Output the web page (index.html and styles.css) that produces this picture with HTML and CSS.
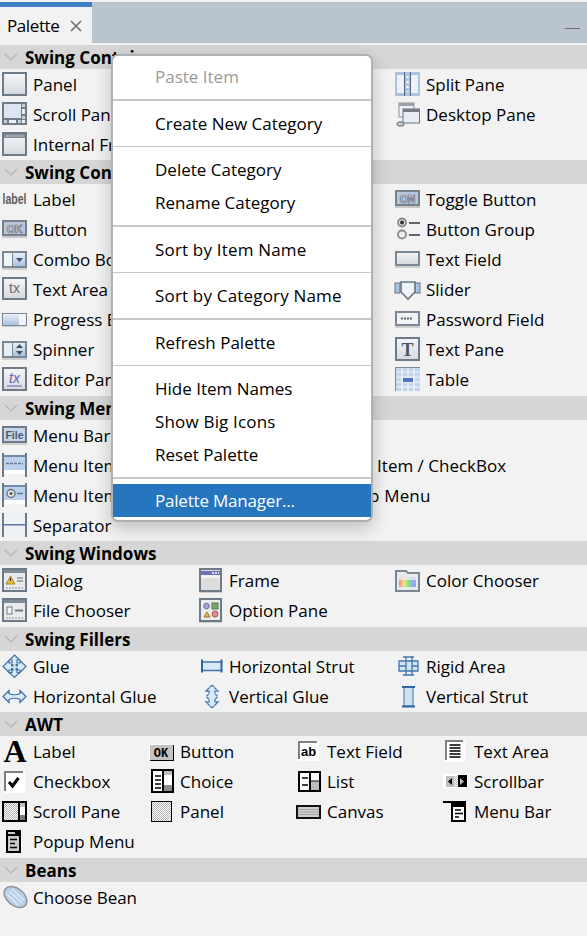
FILE: index.html
```html
<!DOCTYPE html>
<html>
  <head>
    <title>Palette</title>
    <meta charset="utf-8" />
    <link rel="stylesheet" href="styles.css">
  </head>

  <body>
    <svg class="defs">
      <defs>
        <linearGradient id="soft" x1="0" y1="0" x2="0" y2="1">
          <stop offset="0" stop-color="#f4f6f8" />
          <stop offset="1" stop-color="#d5d9de" />
        </linearGradient>
        <linearGradient id="sky" x1="0" y1="0" x2="0" y2="1">
          <stop offset="0" stop-color="#e6eef7" />
          <stop offset="1" stop-color="#a9c3e0" />
        </linearGradient>
        <linearGradient id="rainbow" x1="0" y1="0" x2="1" y2="0">
          <stop offset="0" stop-color="#f28a8a" />
          <stop offset="0.3" stop-color="#f0e37a" />
          <stop offset="0.55" stop-color="#86e48c" />
          <stop offset="0.8" stop-color="#80b4f2" />
          <stop offset="1" stop-color="#d88ae6" />
        </linearGradient>
        <pattern id="dither" width="2" height="2" patternUnits="userSpaceOnUse">
          <rect width="2" height="2" fill="#fff" />
          <rect width="1" height="1" fill="#b4b4b4" />
          <rect x="1" y="1" width="1" height="1" fill="#b4b4b4" />
        </pattern>
      </defs>
    </svg>

    <div class="tabbar">
      <div class="tab">
        <span class="tab-title">Palette</span>
        <svg class="close" width="12" height="12" viewBox="0 0 12 12"><path d="M1 1l10 10M11 1L1 11" stroke="#6f6f6f" stroke-width="1.6" /></svg>
      </div>
      <div class="minimize"></div>
    </div>

    <section>
      <h2><svg class="chev" width="14" height="8" viewBox="0 0 14 8"><path d="M1 1l6 6 6-6" fill="none" stroke="#b4b4b4" stroke-width="1.2" /></svg>Swing Containers</h2>
      <div class="grid three">
        <div class="item"><svg class="icon" viewBox="0 0 25 25"><rect x="1" y="1" width="23" height="22" fill="url(#soft)" stroke="#6d7a87" stroke-width="2" /></svg>Panel</div>
        <div class="item"></div>
        <div class="item"><svg class="icon" viewBox="0 0 25 25"><rect y="0" width="25" height="24" fill="#a9c4e2" /><rect x="2" y="3" width="7" height="18" fill="#eef2f6" /><rect x="16" y="3" width="7" height="18" fill="#eef2f6" /><rect x="9" y="0" width="1" height="24" fill="#59636e" /><rect x="15" y="0" width="1" height="24" fill="#59636e" /><path d="M12.500 4v16" stroke="#fff" stroke-width="2" stroke-dasharray="2 3" /></svg>Split Pane</div>
        <div class="item"><svg class="icon" viewBox="0 0 25 25"><rect width="25" height="23" fill="#6f7c88" /><rect x="2" y="2" width="17" height="14" fill="#dbe6f2" /><rect x="20" y="2" width="3" height="3" fill="#c8d3df" /><rect x="20" y="7" width="3" height="5" fill="#eef2f6" /><rect x="20" y="14" width="3" height="3" fill="#c8d3df" /><rect x="2" y="18" width="3" height="3" fill="#c8d3df" /><rect x="7" y="18" width="7" height="3" fill="#eef2f6" /><rect x="16" y="18" width="3" height="3" fill="#c8d3df" /><rect x="20" y="18" width="3" height="3" fill="#eef2f6" /></svg>Scroll Pane</div>
        <div class="item"></div>
        <div class="item"><svg class="icon" viewBox="0 0 25 25"><rect x="4" y="1" width="15" height="14" fill="#f0f1f3" stroke="#8a9099" /><rect x="4" y="1" width="15" height="3" fill="#9aa1a9" /><rect x="8" y="7" width="16.500" height="14" fill="#e8edf3" stroke="#6a7580" /><rect x="8" y="7" width="16.500" height="3" fill="#727d88" /><rect x="2" y="20" width="7" height="4" rx="2" fill="#c9c9c9" stroke="#666" /></svg>Desktop Pane</div>
        <div class="item"><svg class="icon" viewBox="0 0 25 25"><rect x="1" y="1" width="23" height="22" fill="url(#soft)" stroke="#6d7a87" stroke-width="2" /><rect x="2" y="2" width="21" height="4" fill="#7f8b97" /><path d="M4 4h17" stroke="#d5dae0" stroke-dasharray="2 1" /></svg>Internal Frame</div>
        <div class="item"></div>
      </div>
    </section>

    <section>
      <h2><svg class="chev" width="14" height="8" viewBox="0 0 14 8"><path d="M1 1l6 6 6-6" fill="none" stroke="#b4b4b4" stroke-width="1.2" /></svg>Swing Controls</h2>
      <div class="grid three tall">
        <div class="item"><svg class="icon" viewBox="0 0 25 25"><text class="glyph" x="12.500" y="16.500" text-anchor="middle" font-size="14" textLength="24" lengthAdjust="spacingAndGlyphs" fill="#5c5c5c">label</text></svg>Label</div>
        <div class="item"></div>
        <div class="item"><svg class="icon" viewBox="0 0 25 25"><rect x="1" y="4" width="23" height="14" fill="#b9c5d8" stroke="#77818c" stroke-width="2" /><rect x="0" y="19" width="25" height="2" fill="#c9c9c9" /><text class="glyph" x="12.500" y="15.500" text-anchor="middle" font-size="10.500" fill="#f0f3f8" stroke="#56657c" stroke-width=".7">ON</text></svg>Toggle Button</div>
        <div class="item"><svg class="icon" viewBox="0 0 25 25"><rect x="1" y="4" width="23" height="14" fill="#b9c5d8" stroke="#77818c" stroke-width="2" /><rect x="0" y="19" width="25" height="2" fill="#c9c9c9" /><text class="glyph" x="12.500" y="15.500" text-anchor="middle" font-size="10.500" fill="#f0f3f8" stroke="#56657c" stroke-width=".7">OK</text></svg>Button</div>
        <div class="item"></div>
        <div class="item"><svg class="icon" viewBox="0 0 25 25"><circle cx="7" cy="5.500" r="4" fill="#d8d8d8" stroke="#8a8a8a" stroke-width="1.800" /><circle cx="7" cy="5.500" r="2" fill="#333" /><circle cx="7" cy="17.500" r="4" fill="#efefef" stroke="#8a8a8a" stroke-width="1.800" /><rect x="14" y="5" width="11" height="2" fill="#5d6772" /><rect x="14" y="17" width="11" height="2" fill="#5d6772" /></svg>Button Group</div>
        <div class="item"><svg class="icon" viewBox="0 0 25 25"><rect x="0" y="4" width="25" height="17" fill="#7b8793" /><rect x="2" y="6" width="8" height="13" fill="#eef3f8" /><rect x="11" y="6" width="12" height="13" fill="url(#sky)" /><path d="M14 11h7l-3.500 4z" fill="#45505c" /><rect x="0" y="21" width="25" height="2" fill="#cfcfcf" /></svg>Combo Box</div>
        <div class="item"></div>
        <div class="item"><svg class="icon" viewBox="0 0 25 25"><rect x="1" y="5" width="23" height="13" fill="url(#soft)" stroke="#7b8793" stroke-width="2" /><rect x="0" y="19" width="25" height="2" fill="#cfcfcf" /></svg>Text Field</div>
        <div class="item"><svg class="icon" viewBox="0 0 25 25"><rect x="1" y="1" width="23" height="21" fill="url(#soft)" stroke="#6d7a87" stroke-width="2" /><text x="12.500" y="16" text-anchor="middle" font-size="14" font-family="Liberation Sans" fill="#6c6c6c">tx</text></svg>Text Area</div>
        <div class="item"></div>
        <div class="item"><svg class="icon" viewBox="0 0 25 25"><rect x="0" y="6" width="5" height="10" fill="#a9c4e2" stroke="#6a7580" /><rect x="20" y="6" width="5" height="10" fill="#a9c4e2" stroke="#6a7580" /><path d="M6 5h14v10l-7 7-7-7z" fill="#eef3f8" stroke="#6a7580" stroke-width="1.600" /></svg>Slider</div>
        <div class="item"><svg class="icon" viewBox="0 0 25 25"><rect x="0" y="6" width="25" height="13" fill="#7b8793" /><rect x="1" y="7" width="16" height="11" fill="url(#sky)" /><rect x="17" y="7" width="7" height="11" fill="#f1f3f5" /><rect x="0" y="19" width="25" height="1" fill="#cfcfcf" /></svg>Progress Bar</div>
        <div class="item"></div>
        <div class="item"><svg class="icon" viewBox="0 0 25 25"><rect x="1" y="5" width="23" height="13" fill="#f0f2f5" stroke="#7b8793" stroke-width="2" /><path d="M6 11.500h12" stroke="#5d6772" stroke-width="2" stroke-dasharray="2 1" /><rect x="0" y="19" width="25" height="2" fill="#cfcfcf" /></svg>Password Field</div>
        <div class="item"><svg class="icon" viewBox="0 0 25 25"><rect x="0" y="4" width="25" height="17" fill="#7b8793" /><rect x="2" y="6" width="8" height="13" fill="#e7eef6" /><rect x="11" y="6" width="12" height="13" fill="url(#sky)" /><path d="M14 11l3.500-4 3.500 4zM14 14h7l-3.500 4z" fill="#45505c" /><rect x="0" y="21" width="25" height="2" fill="#cfcfcf" /></svg>Spinner</div>
        <div class="item"></div>
        <div class="item"><svg class="icon" viewBox="0 0 25 25"><rect x="1" y="1" width="23" height="22" fill="url(#soft)" stroke="#6d7a87" stroke-width="2" /><text x="12.500" y="18.500" text-anchor="middle" font-size="18" font-weight="bold" font-family="Liberation Serif" fill="#4c5660">T</text></svg>Text Pane</div>
        <div class="item"><svg class="icon" viewBox="0 0 25 25"><rect x="1" y="1" width="23" height="22" fill="url(#soft)" stroke="#6d7a87" stroke-width="2" /><text x="12.500" y="16" text-anchor="middle" font-size="14" font-style="italic" font-family="Liberation Sans" fill="#6b5fb0">tx</text><path d="M5 19h15" stroke="#6b5fb0" /></svg>Editor Pane</div>
        <div class="item"></div>
        <div class="item"><svg class="icon" viewBox="0 0 25 25"><rect width="25" height="24" fill="#c3d5ea" /><path d="M0 5h25M0 10h25M0 15h25M0 20h25M7 0v24M13 0v24M19 0v24" stroke="#f3f6f9" stroke-width="1.200" /><rect x="8" y="11" width="10" height="4" fill="#4f74c0" /><path d="M.5 24V.5H25" fill="none" stroke="#7e8a96" /></svg>Table</div>
      </div>
    </section>

    <section>
      <h2><svg class="chev" width="14" height="8" viewBox="0 0 14 8"><path d="M1 1l6 6 6-6" fill="none" stroke="#b4b4b4" stroke-width="1.2" /></svg>Swing Menus</h2>
      <div class="grid two">
        <div class="item"><svg class="icon" viewBox="0 0 25 25"><rect x="1" y="4" width="23" height="15" fill="#c4d6ea" stroke="#6d7a87" stroke-width="2" /><rect x="0" y="20" width="25" height="2" fill="#cfcfcf" /><text class="glyph" x="12.500" y="16" text-anchor="middle" font-size="10.500" fill="#4a5a70">File</text></svg>Menu Bar</div>
        <div class="item"></div>
        <div class="item"><svg class="icon" viewBox="0 0 25 25"><rect x="0" y="0" width="2" height="24" fill="#6d7a87" /><rect x="23" y="0" width="2" height="24" fill="#6d7a87" /><rect x="2" y="2" width="21" height="2" fill="#7387a8" /><rect x="2" y="4" width="21" height="13" fill="#bcd2ea" /><rect x="2" y="17" width="21" height="4" fill="#fff" /><path d="M4 10.500h17" stroke="#69788c" stroke-width="1.500" stroke-dasharray="3 1" /></svg>Menu Item</div>
        <div class="item"><svg class="icon" viewBox="0 0 25 25"></svg>Menu Item / CheckBox</div>
        <div class="item"><svg class="icon" viewBox="0 0 25 25"><rect x="0" y="0" width="2" height="24" fill="#6d7a87" /><rect x="23" y="0" width="2" height="24" fill="#6d7a87" /><rect x="2" y="2" width="21" height="2" fill="#7387a8" /><rect x="2" y="4" width="21" height="13" fill="#bcd2ea" /><rect x="2" y="17" width="21" height="4" fill="#fff" /><circle cx="9" cy="10.500" r="4" fill="#e3e3e3" stroke="#6d7a87" stroke-width="1.500" /><circle cx="9" cy="10.500" r="1.500" fill="#56606b" /><path d="M15 10.500h6" stroke="#69788c" stroke-width="1.500" /></svg>Menu Item</div>
        <div class="item wide"><svg class="icon" viewBox="0 0 25 25"></svg>Popup Menu</div>
        <div class="item"><svg class="icon" viewBox="0 0 25 25"><rect x="0" y="0" width="2" height="24" fill="#6d7a87" /><rect x="23" y="0" width="2" height="24" fill="#6d7a87" /><rect x="2" y="2" width="21" height="20" fill="#eef1f5" /><rect x="2" y="11" width="21" height="1.500" fill="#5d74a8" /></svg>Separator</div>
      </div>
    </section>

    <section>
      <h2><svg class="chev" width="14" height="8" viewBox="0 0 14 8"><path d="M1 1l6 6 6-6" fill="none" stroke="#b4b4b4" stroke-width="1.2" /></svg>Swing Windows</h2>
      <div class="grid three tall">
        <div class="item"><svg class="icon" viewBox="0 0 25 25"><rect x="1" y="1" width="23" height="22" fill="#e8eaed" stroke="#6d7a87" stroke-width="2" /><rect x="2" y="2" width="21" height="3" fill="#7f8b97" /><path d="M4 20h17" stroke="#8a95a0" stroke-dasharray="2 1" /><path d="M4 16l4.500-8 4.500 8z" fill="#e8b93a" stroke="#a8862c" /><rect x="8" y="10" width="1" height="3" fill="#333" /><path d="M15 10h6M15 13h6" stroke="#8a95a0" stroke-width="1.500" /></svg>Dialog</div>
        <div class="item"><svg class="icon" viewBox="0 0 25 25"><rect x="2" y="1" width="21" height="22" fill="#dcdcdc" stroke="#6d7a87" stroke-width="2" /><rect x="3" y="3" width="19" height="4" fill="#6b72b8" /><path d="M14 5h7" stroke="#fff" stroke-width="1.500" stroke-dasharray="2 1" /><rect x="3" y="7" width="19" height="3" fill="#f2f2f2" /><rect x="1" y="24" width="23" height="1" fill="#cfcfcf" /></svg>Frame</div>
        <div class="item"><svg class="icon" viewBox="0 0 25 25"><path d="M1 3h10l2 2h11v18H1z" fill="#e7eaee" stroke="#7b8793" stroke-width="2" /><rect x="4" y="9" width="17" height="10" fill="url(#rainbow)" /><rect x="4" y="8" width="17" height="4" fill="#eceaf0" opacity=".8" /></svg>Color Chooser</div>
        <div class="item"><svg class="icon" viewBox="0 0 25 25"><rect x="1" y="1" width="23" height="22" fill="#e8eaed" stroke="#6d7a87" stroke-width="2" /><rect x="2" y="2" width="21" height="3" fill="#7f8b97" /><path d="M4 20h17" stroke="#8a95a0" stroke-dasharray="2 1" /><rect x="5" y="9" width="5" height="7" fill="#f5f5f5" stroke="#6d7a87" /><path d="M13 12.500h8" stroke="#6d7a87" stroke-width="2" /></svg>File Chooser</div>
        <div class="item"><svg class="icon" viewBox="0 0 25 25"><rect x="2" y="1" width="21" height="22" fill="#ececec" stroke="#6d7a87" stroke-width="2" /><circle cx="8.500" cy="8" r="2.800" fill="#a8a4d8" stroke="#6d6a9c" /><rect x="14" y="5" width="6" height="6" fill="#7aa86a" stroke="#55784a" /><path d="M6 19l3-5 3 5z" fill="#e0b94a" stroke="#967a2c" /><circle cx="17" cy="16" r="3" fill="#e08a8a" stroke="#a05a5a" /><rect x="1" y="24" width="23" height="1" fill="#cfcfcf" /></svg>Option Pane</div>
      </div>
    </section>

    <section>
      <h2><svg class="chev" width="14" height="8" viewBox="0 0 14 8"><path d="M1 1l6 6 6-6" fill="none" stroke="#b4b4b4" stroke-width="1.2" /></svg>Swing Fillers</h2>
      <div class="grid three">
        <div class="item"><svg class="icon" viewBox="0 0 25 25"><path d="M12.500 1l5 5h-2.500v3h3v-2.500l6 6-6 6v-2.500h-3v2.500h2.500l-5 5-5-5h2.500v-2.500h-3v2.500l-6-6 6-6v2.500h3v-3H7.500z" fill="#dbe8f6" stroke="#3f74ad" stroke-width="1.200" /><rect x="9" y="10" width="2.500" height="2.500" fill="#3f74ad" /><rect x="13.500" y="10" width="2.500" height="2.500" fill="#3f74ad" /><rect x="9" y="14" width="2.500" height="2.500" fill="#3f74ad" /><rect x="13.500" y="14" width="2.500" height="2.500" fill="#3f74ad" /></svg>Glue</div>
        <div class="item"><svg class="icon" viewBox="0 0 25 25"><rect x="4" y="8" width="19" height="8.500" fill="#dbe8f6" /><path d="M4 8h19M4 16.500h19" stroke="#3f74ad" stroke-width="1.300" /><path d="M4 5.500v13M23.500 5.500v13" stroke="#2f659e" stroke-width="2" /></svg>Horizontal Strut</div>
        <div class="item"><svg class="icon" viewBox="0 0 25 25"><rect x="4" y="7" width="19" height="10" fill="#d3e3f4" /><path d="M8 3h11M8 21h11M11 3v18M17 3v18M4 7h19v10H4zM4 12h7M17 12h6" stroke="#3f74ad" stroke-width="1.300" fill="none" /></svg>Rigid Area</div>
        <div class="item"><svg class="icon" viewBox="0 0 25 25"><path d="M1 12.500l6-6V9.500c3 1.500 8 1.500 11 0V6.500l6 6-6 6v-3c-3-1.500-8-1.500-11 0v3z" fill="#dbe8f6" stroke="#3f74ad" stroke-width="1.300" /></svg>Horizontal Glue</div>
        <div class="item"><svg class="icon" viewBox="0 0 25 25"><path d="M14 1l6 6h-3v3l2 1.500v2L17 15v3h3l-6 6-6-6h3v-3l-2-1.500v-2L11 10V7H8z" fill="#dbe8f6" stroke="#3f74ad" stroke-width="1.300" stroke-dasharray="3 .6" /></svg>Vertical Glue</div>
        <div class="item"><svg class="icon" viewBox="0 0 25 25"><rect x="9" y="3" width="9" height="19" fill="#cfe0f2" stroke="#3f74ad" /><path d="M7 3h13M7 22.500h13" stroke="#2f659e" stroke-width="2" /></svg>Vertical Strut</div>
      </div>
    </section>

    <section>
      <h2><svg class="chev" width="14" height="8" viewBox="0 0 14 8"><path d="M1 1l6 6 6-6" fill="none" stroke="#b4b4b4" stroke-width="1.2" /></svg>AWT</h2>
      <div class="grid four tall">
        <div class="item"><svg class="icon" viewBox="0 0 25 25"><text x="13" y="23" text-anchor="middle" font-size="32" font-weight="bold" font-family="Liberation Serif" fill="#000">A</text></svg>Label</div>
        <div class="item"><svg class="icon" viewBox="0 0 25 25"><rect x="1" y="6" width="24" height="16" fill="#000" /><rect x="0" y="5" width="24" height="16" fill="#fff" /><rect x="1" y="6" width="23" height="15" fill="#c2c2c2" /><text x="12" y="18" text-anchor="middle" font-size="12" font-family="Liberation Mono" font-weight="bold" fill="#000">OK</text></svg>Button</div>
        <div class="item"><svg class="icon" viewBox="0 0 25 25"><rect x="2" y="2" width="21" height="20" fill="#fff" /><rect x="2" y="2" width="19" height="18" fill="#7f7f7f" /><rect x="4" y="4" width="17" height="16" fill="#fff" /><text x="12.500" y="17" text-anchor="middle" font-size="13" font-family="Liberation Sans" font-weight="bold" fill="#000">ab</text></svg>Text Field</div>
        <div class="item"><svg class="icon" viewBox="0 0 25 25"><rect x="2" y="1" width="20" height="22" fill="#fff" /><rect x="2" y="1" width="18" height="20" fill="#7f7f7f" /><rect x="4" y="3" width="16" height="18" fill="#fff" /><path d="M6.500 6h11M6.500 9h11M6.500 12h11M6.500 15h11M6.500 18h11" stroke="#000" stroke-width="1.300" /></svg>Text Area</div>
        <div class="item"><svg class="icon" viewBox="0 0 25 25"><rect x="2" y="2" width="21" height="22" fill="#fff" /><rect x="2" y="2" width="19" height="20" fill="#7f7f7f" /><rect x="4" y="4" width="17" height="18" fill="#fff" /><path d="M7 13l3.500 4 6-8" fill="none" stroke="#000" stroke-width="3" /></svg>Checkbox</div>
        <div class="item"><svg class="icon" viewBox="0 0 25 25"><rect x="2" y="0" width="23" height="24" fill="#000" /><rect x="4" y="2" width="19" height="20" fill="#fff" /><rect x="13" y="2" width="2" height="20" fill="#000" /><rect x="15" y="2" width="8" height="4" fill="#bdbdbd" /><rect x="15" y="16" width="8" height="6" fill="#8c8c8c" /><path d="M6 7h6M6 11h6M6 15h6M6 19h6" stroke="#000" stroke-width="1.300" /></svg>Choice</div>
        <div class="item"><svg class="icon" viewBox="0 0 25 25"><rect x="2" y="2" width="23" height="21" fill="#000" /><rect x="4" y="4" width="19" height="17" fill="#fff" /><rect x="13" y="4" width="2" height="17" fill="#000" /><rect x="15" y="12" width="8" height="9" fill="#bdbdbd" /><path d="M6 9h6M6 16h6" stroke="#000" stroke-width="1.500" /><path d="M15 12h8" stroke="#000" /></svg>List</div>
        <div class="item"><svg class="icon" viewBox="0 0 25 25"><rect x="0" y="5" width="25" height="14" fill="#fff" /><rect x="3" y="7" width="8" height="11" fill="#bdbdbd" /><rect x="11" y="7" width="4" height="11" fill="url(#dither)" /><rect x="15" y="6" width="9" height="12" fill="#000" /><path d="M9 9l-4 3.500 4 3.500z" fill="#000" /><path d="M17 9l4 3.500-4 3.500z" fill="#bdbdbd" /></svg>Scrollbar</div>
        <div class="item"><svg class="icon" viewBox="0 0 25 25"><rect y="2" width="25" height="21" fill="#000" /><rect x="2" y="4" width="14" height="17" fill="url(#dither)" /><rect x="18" y="4" width="5" height="17" fill="#fff" /><rect x="18" y="4" width="5" height="4" fill="#c2c2c2" /><rect x="18" y="16" width="5" height="5" fill="#777" /></svg>Scroll Pane</div>
        <div class="item"><svg class="icon" viewBox="0 0 25 25"><rect x="2" y="2" width="21" height="21" fill="#000" /><rect x="3" y="3" width="19" height="19" fill="url(#dither)" /></svg>Panel</div>
        <div class="item"><svg class="icon" viewBox="0 0 25 25"><rect x="0" y="6" width="25" height="14" fill="#111" /><rect x="2" y="8" width="21" height="10" fill="#cfcfcf" /><path d="M2 10.500h21M2 13h21M2 15.500h21" stroke="#a4a4a4" /></svg>Canvas</div>
        <div class="item"><svg class="icon" viewBox="0 0 25 25"><rect x="0" y="2" width="23" height="2" fill="#000" /><rect x="8" y="4" width="15" height="19" fill="#000" /><rect x="10" y="8" width="11" height="13" fill="#fff" /><path d="M12 11h6M12 14.500h8M12 18h4" stroke="#000" stroke-width="1.500" /></svg>Menu Bar</div>
        <div class="item"><svg class="icon" viewBox="0 0 25 25"><rect x="4" y="1" width="15" height="23" fill="#000" /><rect x="6" y="7" width="11" height="15" fill="#c9c9c9" /><rect x="6" y="3" width="7" height="2" fill="#c9c9c9" /><path d="M8 10.500h7M8 14.500h5M8 18.500h7" stroke="#000" stroke-width="1.500" /></svg>Popup Menu</div>
      </div>
    </section>

    <section>
      <h2><svg class="chev" width="14" height="8" viewBox="0 0 14 8"><path d="M1 1l6 6 6-6" fill="none" stroke="#b4b4b4" stroke-width="1.2" /></svg>Beans</h2>
      <div class="grid three">
        <div class="item"><svg class="icon" viewBox="0 0 25 25"><ellipse cx="13.500" cy="12" rx="13" ry="8.500" transform="rotate(40 13.500 12)" fill="#b8cfe6" stroke="#8a939c" stroke-width="1.500" /><path d="M7 6l13 12M10 4l12 11M5 9l11 11" stroke="#dfeaf5" stroke-width="1.500" /></svg>Choose Bean</div>
      </div>
    </section>

    <div class="menu">
      <div class="menu-item disabled">Paste Item</div>
      <div class="menu-sep"></div>
      <div class="menu-item">Create New Category</div>
      <div class="menu-sep"></div>
      <div class="menu-item">Delete Category</div>
      <div class="menu-item">Rename Category</div>
      <div class="menu-sep"></div>
      <div class="menu-item wide">Sort by Item Name</div>
      <div class="menu-sep"></div>
      <div class="menu-item wide">Sort by Category Name</div>
      <div class="menu-sep"></div>
      <div class="menu-item">Refresh Palette</div>
      <div class="menu-sep"></div>
      <div class="menu-item">Hide Item Names</div>
      <div class="menu-item wide">Show Big Icons</div>
      <div class="menu-item">Reset Palette</div>
      <div class="menu-sep last"></div>
      <div class="menu-item selected">Palette Manager...</div>
    </div>
  </body>
</html>
```

FILE: styles.css
```css
html {
  background-color: #f2f2f2;
}

body {
  margin: 0;
  height: 936px;
  overflow: hidden;
  position: relative;
  font-family: "Open Sans", "Noto Sans", sans-serif;
  font-size: 17px;
  color: #000;
  background-color: #f2f2f2;
}

.defs {
  position: absolute;
  width: 0;
  height: 0;
}

.tabbar {
  display: flex;
  justify-content: space-between;
  align-items: flex-end;
  height: 41px;
  margin-top: 2px;
  margin-bottom: 2px;
  background-color: #b9c4ce;
}

.tab {
  display: flex;
  align-items: center;
  gap: 11px;
  box-sizing: border-box;
  width: 92px;
  height: 41px;
  padding-left: 7px;
  background-color: #f2f2f2;
  border-top: 5px solid #3d80c6;
}

.tab-title {
  letter-spacing: -0.4px;
}

.close {
  margin-top: 1px;
}

.minimize {
  width: 15px;
  height: 1px;
  margin-right: 7px;
  margin-bottom: 14px;
  background-color: #6b7076;
}

h2 {
  display: flex;
  align-items: center;
  height: 24px;
  margin: 0;
  padding-left: 4px;
  font-size: 17px;
  font-weight: 700;
  background-color: #d6d6d6;
}

.chev {
  margin-right: 7px;
}

.grid {
  display: grid;
  grid-auto-rows: 30px;
  padding-bottom: 1px;
}

.tall {
  padding-bottom: 2px;
}

.three {
  grid-template-columns: 196px 197px 1fr;
}

.two {
  grid-template-columns: 294px 1fr;
}

.four {
  grid-template-columns: repeat(4, 147px);
}

.item {
  display: flex;
  align-items: center;
  white-space: nowrap;
  padding-left: 2px;
}

.icon {
  flex: none;
  width: 25px;
  height: 25px;
  margin-right: 6px;
  overflow: visible;
}

.glyph {
  font-family: "Liberation Sans", sans-serif;
  font-weight: 700;
}

.menu {
  position: absolute;
  top: 54px;
  left: 111px;
  box-sizing: border-box;
  display: flex;
  flex-direction: column;
  width: 262px;
  height: 468px;
  padding: 4px 0 3px;
  background-color: #fff;
  border: 2px solid #b0b0b0;
  border-radius: 7px;
  box-shadow: 0 6px 18px rgba(0, 0, 0, 0.22);
}

.menu-item {
  flex: none;
  height: 33px;
  line-height: 33px;
  padding-left: 42px;
  white-space: nowrap;
}

.menu-sep {
  flex: none;
  height: 1.5px;
  margin: 6px 0;
  background-color: #c8c8c8;
}

.menu-sep.last {
  margin-bottom: 5.5px;
}

.wide {
  letter-spacing: 0.18px;
}

.disabled {
  color: #9a9a9a;
}

.selected {
  color: #fff;
  line-height: 34px;
  letter-spacing: -0.2px;
  background-color: #2675bf;
}
```
